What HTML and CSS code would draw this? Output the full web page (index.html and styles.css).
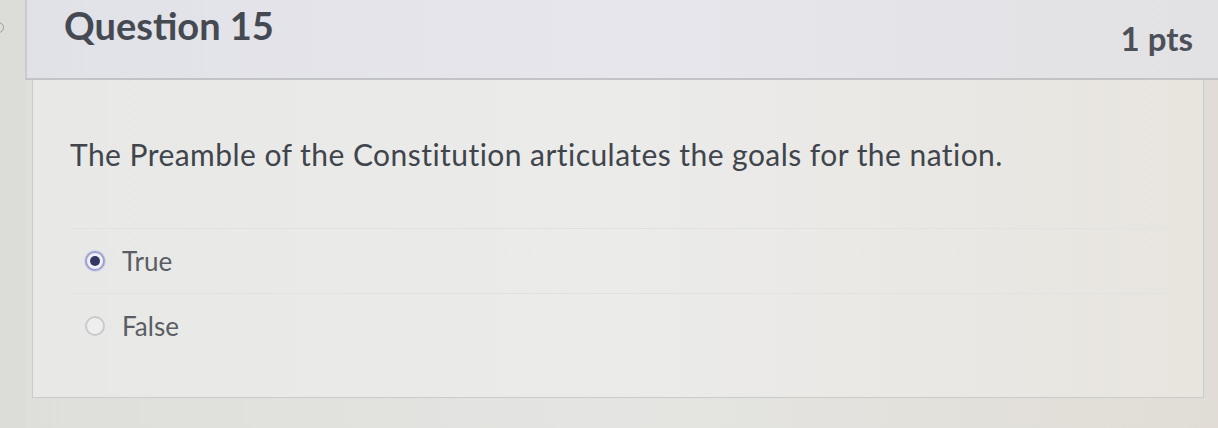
FILE: index.html
```html
<!DOCTYPE html>
<html lang="en">
<head>
<meta charset="utf-8">
<title>Question 15</title>
<link rel="stylesheet" href="styles.css">
</head>
<body>
<div class="page">
  <div class="gutter"><span class="gutter-dot"></span></div>
  <div class="card">
    <div class="header">
      <h2 class="title">Question 15</h2>
      <div class="pts">1 pts</div>
    </div>
    <div class="body">
      <p class="question">The Preamble of the Constitution articulates the goals for the nation.</p>
      <div class="answers">
        <label class="answer">
          <span class="radio checked"></span>
          <span class="label">True</span>
        </label>
        <label class="answer">
          <span class="radio"></span>
          <span class="label">False</span>
        </label>
      </div>
    </div>
  </div>
</div>
</body>
</html>
```

FILE: styles.css
```css
html, body {
  margin: 0;
  padding: 0;
}
body {
  width: 1218px;
  height: 428px;
  overflow: hidden;
  font-family: Lato, "Open Sans", sans-serif;
  background: #e6e6e3;
}
.page {
  display: flex;
  height: 428px;
  background: linear-gradient(90deg, #dedfda 0%, #e4e5e2 50%, #e1ddd6 100%);
}
.gutter {
  width: 25px;
  flex: none;
  position: relative;
  background: #dcddd8;
}
.gutter-dot {
  position: absolute;
  left: -7px;
  top: 22px;
  width: 9px;
  height: 9px;
  border: 1.5px solid #9a9aa0;
  border-radius: 50%;
}
.card {
  flex: 1;
  display: flex;
  flex-direction: column;
}
.header {
  height: 78px;
  display: flex;
  justify-content: space-between;
  align-items: flex-start;
  padding: 0 25px 0 37px;
  background: linear-gradient(90deg, #e1e1e8 0%, #e6e6ec 50%, #e2e2e4 100%);
  border-left: 2px solid #cbcbcf;
  border-bottom: 2px solid #c2c3c6;
}
.title {
  margin: 2px 0 0;
  font-size: 38px;
  font-weight: 700;
  color: #454a52;
}
.pts {
  margin-top: 18px;
  font-size: 33px;
  font-weight: 700;
  color: #4c5058;
}
.body {
  height: 317px;
  margin: 0 14px 0 7px;
  padding: 0 37px;
  border: 1px solid #cbcbca;
  border-top: none;
  background: linear-gradient(90deg, #e8e9e6 0%, #ebebea 50%, #e8e5df 100%);
}
.question {
  margin: 56px 0 0 0;
  font-size: 30px;
  line-height: 36px;
  letter-spacing: 0.45px;
  color: #40454c;
}
.answers {
  margin-top: 56px;
  display: flex;
  flex-direction: column;
}
.answer {
  display: flex;
  align-items: center;
  gap: 17px;
  height: 64px;
  padding-left: 15px;
  border-top: 1px solid #e2e2e0;
}
.radio {
  width: 20px;
  height: 20px;
  border-radius: 50%;
  border: 2px solid #cacacc;
  background: #eeeeee;
  box-sizing: border-box;
  position: relative;
}
.radio.checked {
  border: 2px solid #9ea2d2;
  background: #f0f0f6;
  box-shadow: 0 0 0 1px #d6d7e6;
}
.radio.checked::after {
  content: "";
  position: absolute;
  left: 3px;
  top: 3px;
  width: 10px;
  height: 10px;
  border-radius: 50%;
  background: #343863;
}
.label {
  font-size: 26px;
  color: #5a5e64;
}
```
